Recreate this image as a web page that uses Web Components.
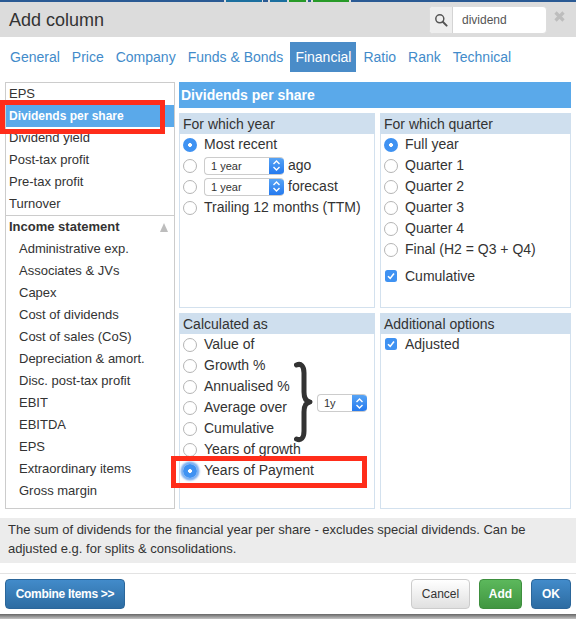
<!DOCTYPE html>
<html>
<head>
<meta charset="utf-8">
<title>Add column</title>
<style>
  html, body { margin: 0; padding: 0; background: #fff; }
  body { width: 576px; height: 619px; overflow: hidden; font-family: "Liberation Sans", Arial, sans-serif; color: #333; }
</style>
</head>
<body>
<add-column-dialog></add-column-dialog>

<script>
class TopStrip extends HTMLElement {
  connectedCallback() {
    // bits of the page behind the dialog that peek out at the very top
    const parts = [[224, "#2a5a94"], [2, "#ddd"], [36, "#1b6f9f"], [1, "#ddd"], [5, "#2a5a94"], [2, "#ddd"], [17, "#1b6f9f"], [2, "#ddd"], [17, "#279a28"], [2, "#ddd"], [3, "#2a5a94"], [2, "#ddd"], [36, "#279a28"], [2, "#ddd"], [225, "#2a5a94"]];
    this.attachShadow({ mode: "open" }).innerHTML = `
      <style>
        :host { display: flex; height: 3px; background: #dcdcdc; }
        div { height: 2px; flex: none; }
      </style>
      ${parts.map((p) => `<div style="width:${p[0]}px;background:${p[1]}"></div>`).join("")}
    `;
  }
}

class DialogHeader extends HTMLElement {
  connectedCallback() {
    this.attachShadow({ mode: "open" }).innerHTML = `
      <style>
        :host { display: flex; align-items: center; height: 34px; background: #dcdcdc; padding: 0 11px 0 9px; }
        h1 { flex: 1; margin: 0; font-size: 18px; font-weight: normal; color: #333; }
        .search { display: flex; flex: none; width: 118px; height: 28px; box-sizing: border-box; border: 1px solid #ddd; border-radius: 4px; background: #fff; overflow: hidden; margin-right: 7px; }
        .addon { width: 22px; background: #eee; border-right: 1px solid #d4d4d4; display: flex; align-items: center; justify-content: center; }
        .value { padding-left: 9px; font-size: 12px; line-height: 26px; color: #555; }
        svg { display: block; }
      </style>
      <h1>${this.getAttribute("title") || ""}</h1>
      <div class="search">
        <div class="addon">
          <svg width="14" height="14" viewBox="0 0 14 14" fill="none" stroke="#555" stroke-width="1.5">
            <circle cx="5.8" cy="5.8" r="4"/>
            <path d="M8.8 8.8 L12.6 12.6" stroke-width="2" stroke-linecap="round"/>
          </svg>
        </div>
        <div class="value"><slot></slot></div>
      </div>
      <svg width="11" height="11" viewBox="0 0 11 11" stroke="#bdbdbd" stroke-width="3.2" style="margin-top:-8px">
        <path d="M1.5 1.5 L9.5 9.5 M9.5 1.5 L1.5 9.5"/>
      </svg>
    `;
  }
}

class TabBar extends HTMLElement {
  connectedCallback() {
    const active = this.getAttribute("active");
    const tabs = this.getAttribute("tabs").split(",");
    this.attachShadow({ mode: "open" }).innerHTML = `
      <style>
        :host { display: flex; gap: 2px; height: 30px; margin-top: 5px; padding-left: 5px; font-size: 14px; }
        span { padding: 0 5px; line-height: 30px; color: #428bca; }
        .on { background: #4a8cc8; color: #fff; }
      </style>
      ${tabs.map((t) => `<span class="${t === active ? "on" : ""}">${t}</span>`).join("")}
    `;
  }
}

class SideList extends HTMLElement {
  connectedCallback() {
    const top = ["EPS", "Dividends per share", "Dividend yield", "Post-tax profit", "Pre-tax profit", "Turnover"];
    const rest = ["Administrative exp.", "Associates & JVs", "Capex", "Cost of dividends", "Cost of sales (CoS)", "Depreciation & amort.", "Disc. post-tax profit", "EBIT", "EBITDA", "EPS", "Extraordinary items", "Gross margin"];
    this.attachShadow({ mode: "open" }).innerHTML = `
      <style>
        :host { display: block; box-sizing: border-box; width: 170px; height: 427px; border: 1px solid #ccc; font-size: 13px; color: #333; overflow: hidden; }
        div { height: 22px; line-height: 22px; padding-left: 3px; }
        .sel { background: #5aa9ea; color: #fff; font-weight: bold; font-size: 12px; }
        .group { display: flex; justify-content: space-between; align-items: center; border-top: 1px solid #ccc; font-weight: bold; padding-right: 6px; }
        .sub { padding-left: 13px; }
        svg { display: block; }
      </style>
      ${top.map((t) => `<div class="${t === "Dividends per share" ? "sel" : ""}">${t.replace("&", "&amp;")}</div>`).join("")}
      <div class="group">Income statement
        <svg width="8" height="9" viewBox="0 0 8 9"><path d="M4 0 L8 9 L0 9 Z" fill="#bdbdbd"/></svg>
      </div>
      ${rest.map((t) => `<div class="sub">${t.replace("&", "&amp;")}</div>`).join("")}
    `;
  }
}

class OptionPanel extends HTMLElement {
  connectedCallback() {
    this.attachShadow({ mode: "open" }).innerHTML = `
      <style>
        :host { display: block; box-sizing: border-box; border: 1px solid #d3e1ee; border-top: 0; background: #fff; font-size: 14px; }
        .head { height: 21px; line-height: 23px; margin: 0 -1px; padding-left: 4px; background: #cfdfee; color: #333; }
        .body { display: grid; padding-left: 3px; }
        ::slotted(*) { grid-area: 1 / 1; }
      </style>
      <div class="head">${this.getAttribute("title")}</div>
      <div class="body"><slot></slot></div>
    `;
  }
}

class OptionRow extends HTMLElement {
  connectedCallback() {
    const kind = this.getAttribute("kind") || "radio";
    this.attachShadow({ mode: "open" }).innerHTML = `
      <style>
        :host { display: flex; align-items: center; height: 21px; gap: 4px; white-space: nowrap; color: #333; }
        :host([spaced]) { margin-top: 6px; }
        .mark { flex: none; box-sizing: border-box; margin-right: 3px; }
        .radio { width: 14px; height: 14px; margin-top: 2px; border-radius: 50%; background: #fff; border: 1px solid #b5b5b5; }
        :host([checked]) .radio { border: 0; background: radial-gradient(circle, #fff 0 1.6px, #3f92f2 2.2px); }
        :host([focus]) .radio { box-shadow: 0 0 2px 2.5px #78aef2; }
        .check { width: 12px; height: 12px; margin-left: 1px; margin-right: 4px; border-radius: 2.5px; background: #3f92f2; }
        svg { display: block; }
      </style>
      ${kind === "check"
        ? `<div class="mark check"><svg width="12" height="12" viewBox="0 0 12 12" fill="none" stroke="#fff" stroke-width="1.6"><path d="M3 6.2 L5.2 8.4 L9 3.6"/></svg></div>`
        : `<div class="mark radio"></div>`}
      <slot></slot>
    `;
  }
}

class OptionList extends HTMLElement {
  connectedCallback() {
    this.attachShadow({ mode: "open" }).innerHTML = `
      <style>:host { display: block; margin-top: -1px; }</style>
      <slot></slot>
    `;
  }
}

class SelectBox extends HTMLElement {
  connectedCallback() {
    const width = this.getAttribute("width") || 80;
    this.attachShadow({ mode: "open" }).innerHTML = `
      <style>
        :host { display: flex; flex: none; box-sizing: border-box; width: ${width}px; height: 18px; margin-top: 2px; border: 1px solid #ccc; border-right: 0; border-radius: 4px; background: #fff; font-size: 11px; color: #333; overflow: hidden; }
        .val { flex: 1; padding-left: 6px; line-height: 17px; }
        .arrow { width: 15px; margin: -1px 0; background: linear-gradient(#5aa6f5, #2277ee); display: flex; align-items: center; justify-content: center; }
        svg { display: block; }
      </style>
      <div class="val"><slot></slot></div>
      <div class="arrow">
        <svg width="9" height="13" viewBox="0 0 9 13" fill="none" stroke="#fff" stroke-width="1.4">
          <path d="M1.5 5 L4.5 2 L7.5 5 M1.5 8 L4.5 11 L7.5 8"/>
        </svg>
      </div>
    `;
  }
}

class BraceSelect extends HTMLElement {
  connectedCallback() {
    this.attachShadow({ mode: "open" }).innerHTML = `
      <style>
        :host { display: flex; align-items: center; align-self: start; justify-self: end; margin: 26px 7px 0 0; height: 84px; gap: 3px; }
        svg { display: block; }
      </style>
      <svg width="20" height="84" viewBox="0 0 20 84" fill="none" stroke="#333" stroke-width="5" stroke-linecap="round" stroke-linejoin="round">
        <path d="M2.5 5 C 7 3, 10 6, 10 13 V 32 C 10 38, 12 41.5, 16 42 C 12 42.5, 10 46, 10 52 V 71 C 10 78, 7 81, 2.5 79"/>
      </svg>
      <slot></slot>
    `;
  }
}

class DialogButton extends HTMLElement {
  connectedCallback() {
    const look = this.getAttribute("look") || "plain";
    const looks = {
      plain: "background:linear-gradient(#fff,#e0e0e0);border-color:#ccc;color:#333;font-weight:normal",
      blue: "background:linear-gradient(#428bca,#2d6ca2);border-color:#2b669a;color:#fff",
      green: "background:linear-gradient(#5cb85c,#419641);border-color:#3e8f3e;color:#fff",
    };
    this.attachShadow({ mode: "open" }).innerHTML = `
      <style>
        :host { display: block; flex: none; }
        div { box-sizing: border-box; height: 30px; line-height: 28px; border: 1px solid; border-radius: 4px; text-align: center; font-size: 12px; font-weight: bold; ${looks[look]}; width: ${this.getAttribute("width")}px; }
      </style>
      <div><slot></slot></div>
    `;
  }
}

class AddColumnDialog extends HTMLElement {
  connectedCallback() {
    this.attachShadow({ mode: "open" }).innerHTML = `
      <style>
        :host { display: block; position: relative; width: 576px; height: 619px; overflow: hidden; background: #fff; }
        .main { display: flex; gap: 4px; margin: 10px 5px 0; }
        .right { width: 392px; }
        .title { height: 26px; line-height: 26px; padding-left: 2px; background: #5aa9ea; color: #fff; font-size: 14px; font-weight: bold; }
        .grid { display: grid; grid-template-columns: 196px 191px; grid-template-rows: 195px 196px; gap: 5px; margin-top: 5px; }
        .desc { margin-top: 9px; height: 45px; box-sizing: border-box; padding: 2px 8px 0; background: #ececec; font-size: 13px; line-height: 19px; color: #333; }
        .foot { display: flex; align-items: center; gap: 9px; height: 41px; margin-top: 10px; box-sizing: border-box; border-top: 1px solid #e3e3e3; padding: 0 5px 0; }
        .gap { flex: 1; }
        .back { height: 5px; background: linear-gradient(#666, #c4c4c4); }
        .red { position: absolute; box-sizing: border-box; border: 5px solid #ff2d1a; }
      </style>
      <top-strip></top-strip>
      <dialog-header title="Add column">dividend</dialog-header>
      <tab-bar active="Financial" tabs="General,Price,Company,Funds &amp; Bonds,Financial,Ratio,Rank,Technical"></tab-bar>

      <div class="main">
        <side-list></side-list>
        <div class="right">
          <div class="title">Dividends per share</div>
          <div class="grid">
            <option-panel title="For which year">
              <option-list>
                <option-row checked>Most recent</option-row>
                <option-row><select-box>1 year</select-box>ago</option-row>
                <option-row><select-box>1 year</select-box>forecast</option-row>
                <option-row>Trailing 12 months (TTM)</option-row>
              </option-list>
            </option-panel>
            <option-panel title="For which quarter">
              <option-list>
                <option-row checked>Full year</option-row>
                <option-row>Quarter 1</option-row>
                <option-row>Quarter 2</option-row>
                <option-row>Quarter 3</option-row>
                <option-row>Quarter 4</option-row>
                <option-row>Final (H2 = Q3 + Q4)</option-row>
                <option-row kind="check" spaced>Cumulative</option-row>
              </option-list>
            </option-panel>
            <option-panel title="Calculated as">
              <option-list>
                <option-row>Value of</option-row>
                <option-row>Growth %</option-row>
                <option-row>Annualised %</option-row>
                <option-row>Average over</option-row>
                <option-row>Cumulative</option-row>
                <option-row>Years of growth</option-row>
                <option-row checked focus>Years of Payment</option-row>
              </option-list>
              <brace-select><select-box width="50">1y</select-box></brace-select>
            </option-panel>
            <option-panel title="Additional options">
              <option-list>
                <option-row kind="check">Adjusted</option-row>
              </option-list>
            </option-panel>
          </div>
        </div>
      </div>

      <div class="desc">The sum of dividends for the financial year per share - excludes special dividends. Can be adjusted e.g. for splits &amp; consolidations.</div>

      <div class="foot">
        <dialog-button look="blue" width="120" style="letter-spacing:-0.3px">Combine Items &gt;&gt;</dialog-button>
        <div class="gap"></div>
        <dialog-button width="59">Cancel</dialog-button>
        <dialog-button look="green" width="43">Add</dialog-button>
        <dialog-button look="blue" width="40">OK</dialog-button>
      </div>
      <div class="back"></div>

      <!-- red annotation boxes drawn over the screenshot -->
      <div class="red" style="left:0;top:100px;width:165px;height:34px"></div>
      <div class="red" style="left:171px;top:456px;width:196px;height:32px"></div>
    `;
  }
}

customElements.define("top-strip", TopStrip);
customElements.define("dialog-header", DialogHeader);
customElements.define("tab-bar", TabBar);
customElements.define("side-list", SideList);
customElements.define("option-panel", OptionPanel);
customElements.define("option-row", OptionRow);
customElements.define("option-list", OptionList);
customElements.define("select-box", SelectBox);
customElements.define("brace-select", BraceSelect);
customElements.define("dialog-button", DialogButton);
customElements.define("add-column-dialog", AddColumnDialog);
</script>
</body>
</html>
